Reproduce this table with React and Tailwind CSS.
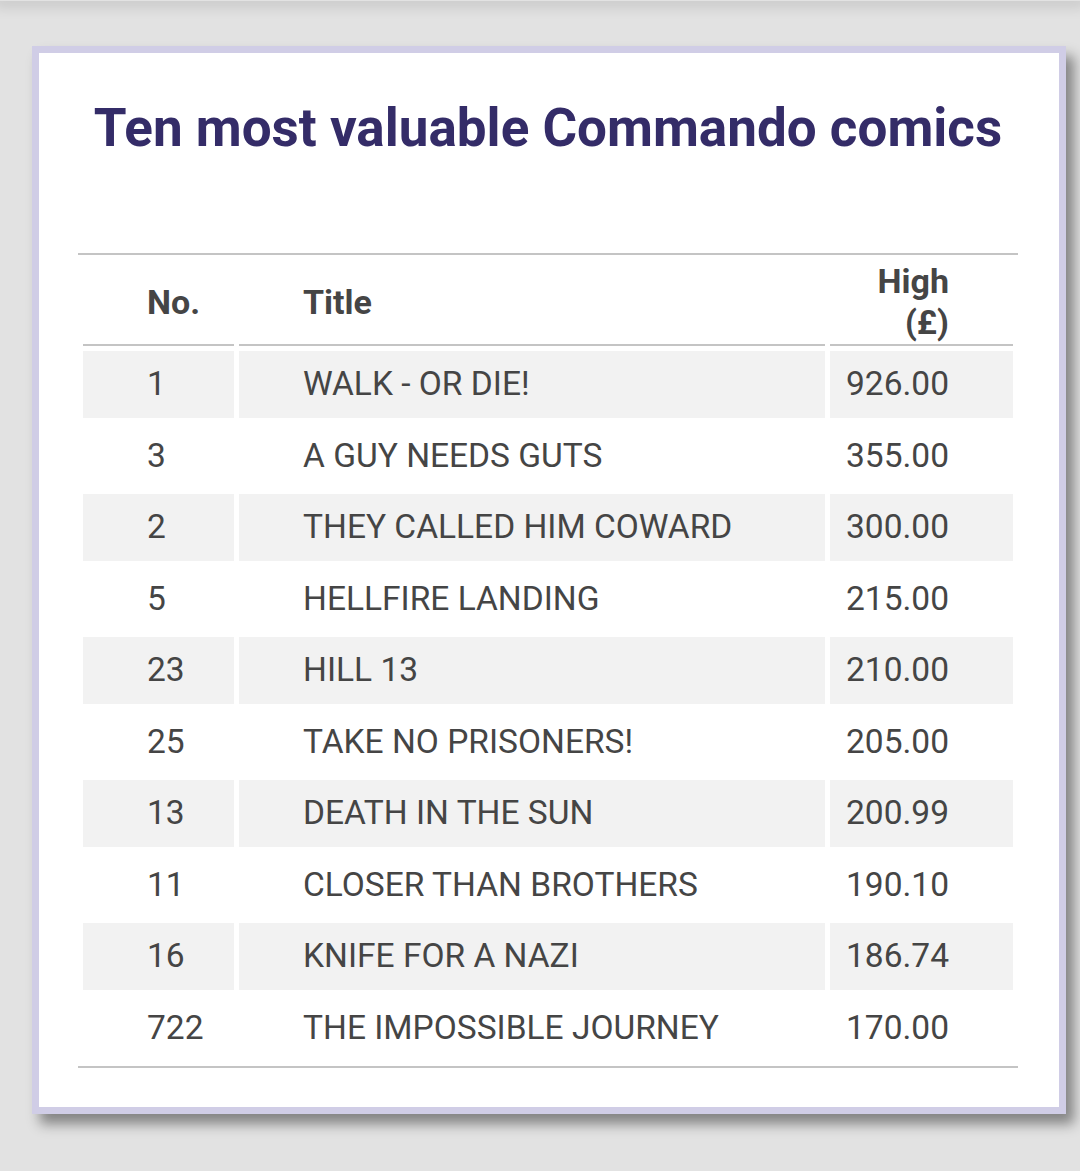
const rows = [
  ["1", "WALK - OR DIE!", "926.00"],
  ["3", "A GUY NEEDS GUTS", "355.00"],
  ["2", "THEY CALLED HIM COWARD", "300.00"],
  ["5", "HELLFIRE LANDING", "215.00"],
  ["23", "HILL 13", "210.00"],
  ["25", "TAKE NO PRISONERS!", "205.00"],
  ["13", "DEATH IN THE SUN", "200.99"],
  ["11", "CLOSER THAN BROTHERS", "190.10"],
  ["16", "KNIFE FOR A NAZI", "186.74"],
  ["722", "THE IMPOSSIBLE JOURNEY", "170.00"],
];

export default function App() {
  return (
    <div className="min-h-[1171px] bg-[#e2e2e2] font-['Roboto',sans-serif] text-[#454545]">
      <div className="h-[1px] shadow-[0_0_14px_6px_rgba(0,0,0,0.12)]" />
      <div className="ml-[32px] mt-[45px] w-[1034px] border-[7px] border-[#d0cde6] bg-white pb-[39px] pl-[39px] pr-[41px] pt-[43px] shadow-[8px_10px_12px_rgba(0,0,0,0.42)]">
        <h1 className="text-center text-[53px] font-bold leading-[64px] text-[#342c68]">
          Ten most valuable Commando comics
        </h1>
        <table className="mt-[93px] w-[940px] border-separate border-spacing-[5px] border-y-2 border-[#c4c4c4] text-[33.5px]">
          <thead>
            <tr className="text-[34px] font-bold">
              <th className="h-[86px] w-[151px] border-b-2 border-[#c4c4c4] pl-[64px] text-left align-middle leading-[41px]">
                No.
              </th>
              <th className="w-[586px] border-b-2 border-[#c4c4c4] pl-[64px] text-left align-middle leading-[41px]">
                Title
              </th>
              <th className="border-b-2 border-[#c4c4c4] pr-[64px] text-right align-middle leading-[41px]">
                High
                <br />
                (£)
              </th>
            </tr>
          </thead>
          <tbody>
            {rows.map((r, i) => (
              <tr key={r[0]} className={i % 2 == 0 ? "bg-[#f2f2f2]" : ""}>
                <td className="h-[66.5px] pl-[64px] align-middle">{r[0]}</td>
                <td className="pl-[64px] align-middle">{r[1]}</td>
                <td className="pr-[64px] text-right align-middle">{r[2]}</td>
              </tr>
            ))}
          </tbody>
        </table>
      </div>
    </div>
  );
}
